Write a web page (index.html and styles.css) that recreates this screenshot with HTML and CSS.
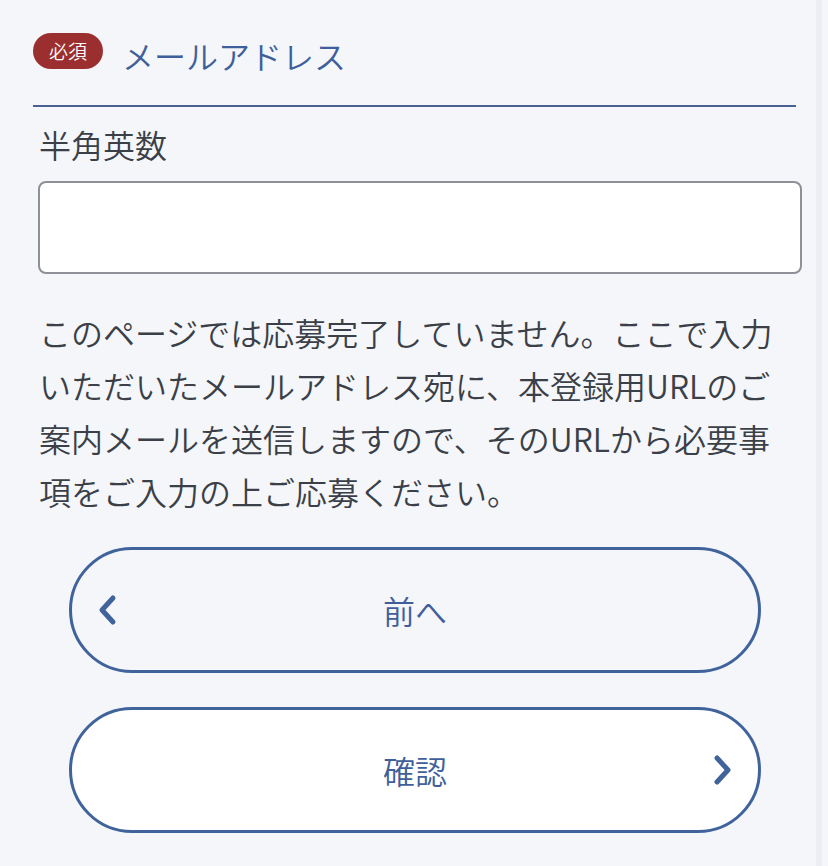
FILE: index.html
```html
<!DOCTYPE html>
<html lang="ja">
<head>
<meta charset="utf-8">
<title>メールアドレス</title>
<link rel="stylesheet" href="styles.css">
</head>
<body>
<main class="page">
  <div class="field-head">
    <span class="badge">必須</span>
    <h2 class="field-title">メールアドレス</h2>
  </div>
  <div class="field-body">
    <p class="field-label">半角英数</p>
    <input class="text-input" type="email" aria-label="メールアドレス">
    <p class="notice">このページでは応募完了していません。ここで入力<br>いただいたメールアドレス宛に、本登録用URLのご<br>案内メールを送信しますので、そのURLから必要事<br>項をご入力の上ご応募ください。</p>
  </div>
  <div class="actions">
    <button class="btn btn-back" type="button">
      <svg class="chev" width="22" height="32" viewBox="0 0 22 32"><polyline points="16,4 5,16 16,28" fill="none" stroke="#41639c" stroke-width="5" stroke-linecap="round" stroke-linejoin="round"/></svg>
      <span class="btn-label">前へ</span>
      <span class="chev-space"></span>
    </button>
    <button class="btn btn-next" type="button">
      <span class="chev-space"></span>
      <span class="btn-label">確認</span>
      <svg class="chev chev-right" width="22" height="32" viewBox="0 0 22 32"><polyline points="6,4 17,16 6,28" fill="none" stroke="#41639c" stroke-width="5" stroke-linecap="round" stroke-linejoin="round"/></svg>
    </button>
  </div>
</main>
</body>
</html>
```

FILE: styles.css
```css
html, body {
  margin: 0;
  padding: 0;
  background: #f4f6fa;
}
body {
  font-family: "Noto Sans CJK JP", "Noto Sans", sans-serif;
  font-weight: 350;
  color: #3b3f47;
  min-height: 866px;
}
body::after {
  content: "";
  position: fixed;
  top: 0;
  bottom: 0;
  right: 6px;
  width: 6px;
  background: #eceef3;
}
.page {
  width: 763px;
  padding: 31px 0 0 33px;
}
.field-head {
  display: flex;
  align-items: flex-start;
  height: 74px;
  border-bottom: 2px solid #4a6291;
}
.badge {
  margin-top: 2px;
  width: 70px;
  height: 36px;
  border-radius: 18px;
  background: #9b2f30;
  color: #fff;
  font-size: 19px;
  line-height: 36px;
  text-align: center;
}
.field-title {
  margin: 4px 0 0 19px;
  font-size: 32px;
  font-weight: 350;
  line-height: 40px;
  color: #3f5f9b;
}
.field-body {
  padding-left: 6px;
}
.field-label {
  margin: 15px 0 0;
  font-size: 32px;
  line-height: 44px;
}
.text-input {
  display: block;
  box-sizing: border-box;
  width: 764px;
  height: 93px;
  margin: 15px 0 0 -1px;
  border: 2px solid #8d9096;
  border-radius: 8px;
  background: #fff;
  outline: none;
}
.notice {
  margin: 32px 0 0;
  font-size: 32px;
  line-height: 53px;
  white-space: nowrap;
}
.actions {
  display: flex;
  flex-direction: column;
  align-items: center;
  gap: 34px;
  margin-top: 29px;
  padding-left: 1px;
}
.btn {
  display: grid;
  grid-template-columns: 1fr auto 1fr;
  align-items: center;
  box-sizing: border-box;
  width: 692px;
  height: 126px;
  padding: 0 25px;
  border: 3.5px solid #41639c;
  border-radius: 63px;
  background: transparent;
  font-family: inherit;
  font-weight: 350;
  font-size: 32px;
  color: #3f5f9b;
  cursor: pointer;
}
.btn-next {
  background: #fff;
}
.btn-label {
  line-height: 40px;
}
.chev {
  display: block;
  justify-self: start;
}
.chev-right {
  justify-self: end;
}
```
